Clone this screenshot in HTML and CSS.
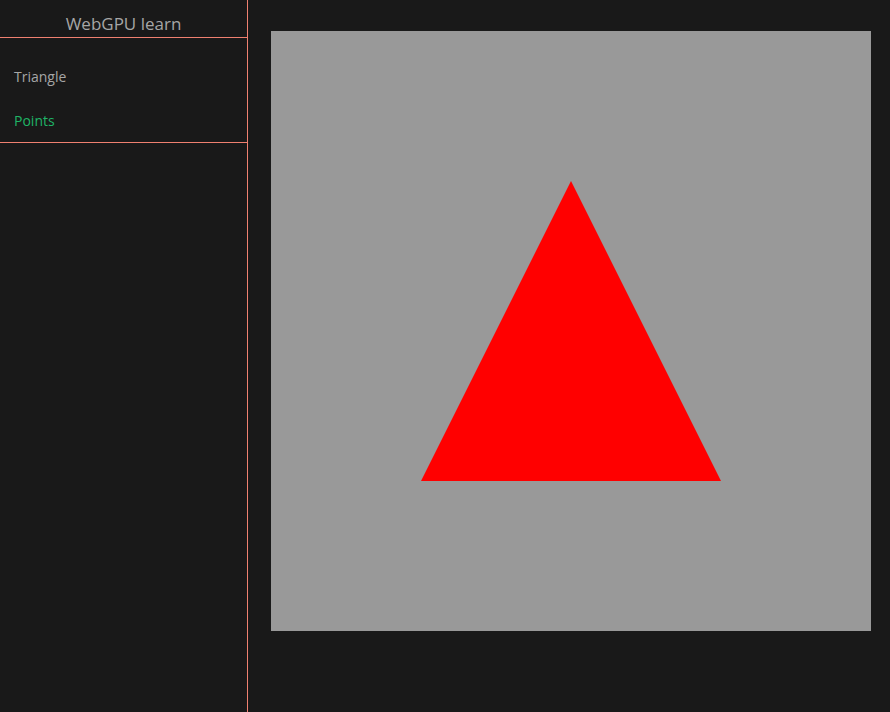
FILE: index.html
```html
<!DOCTYPE html>
<html>
<head>
<meta charset="utf-8">
<link rel="stylesheet" href="styles.css">
</head>
<body>
<div class="app">
  <aside class="sidebar">
    <h1 class="title">WebGPU learn</h1>
    <nav class="nav">
      <a class="nav-item">Triangle</a>
      <a class="nav-item active">Points</a>
    </nav>
  </aside>
  <main class="main">
    <svg class="canvas" width="600" height="600" viewBox="0 0 600 600">
      <rect width="600" height="600" fill="#999999"/>
      <polygon points="300,150 150,450 450,450" fill="#ff0000"/>
    </svg>
  </main>
</div>
</body>
</html>
```
FILE: styles.css
```css
html, body {
  margin: 0;
  padding: 0;
  height: 100%;
  background: #191919;
}
body {
  font-family: "Open Sans", "Noto Sans", sans-serif;
}
.app {
  display: flex;
  height: 712px;
}
.sidebar {
  width: 247px;
  border-right: 1px solid #f08070;
  flex-shrink: 0;
}
.title {
  margin: 0;
  height: 37px;
  overflow: hidden;
  border-bottom: 1px solid #f08070;
  font-size: 17px;
  font-weight: 400;
  color: #a6a6a6;
  text-align: center;
  line-height: 48px;
}
.nav {
  display: flex;
  flex-direction: column;
  padding: 16px 0 0;
  border-bottom: 1px solid #f08070;
}
.nav-item {
  display: block;
  height: 44px;
  line-height: 46px;
  padding-left: 14px;
  font-size: 14px;
  color: #a6a6a6;
  cursor: pointer;
}
.nav-item.active {
  color: #1fb466;
}
.main {
  padding: 31px 0 0 23px;
}
.canvas {
  display: block;
}
```
